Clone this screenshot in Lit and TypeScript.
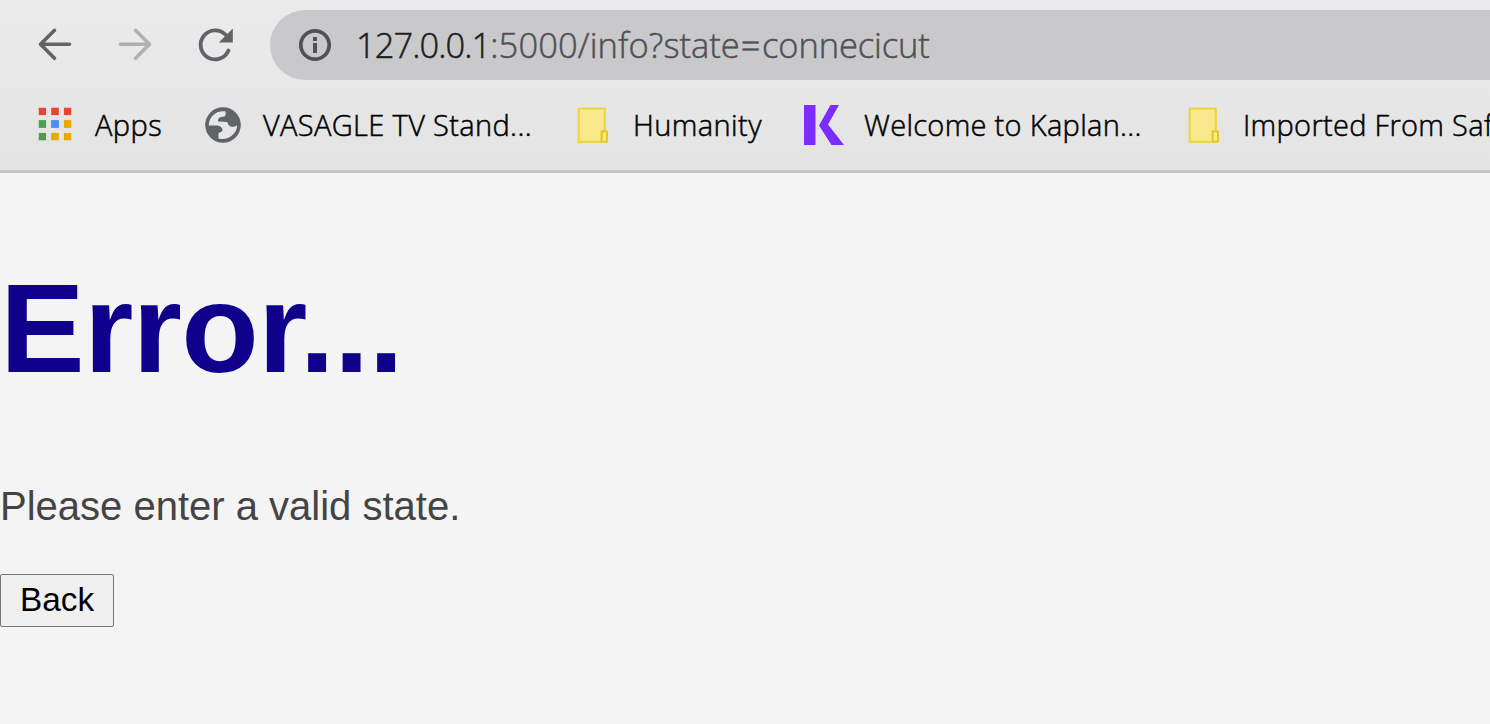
import { LitElement, html, css } from "lit";
import { customElement } from "lit/decorators.js";

const folder = html`<svg class="icon" width="34" height="40" viewBox="0 0 34 40">
  <path d="M2.5 3.5H29V26H31.5V36.5H2.5Z" fill="#fae88c" />
  <path d="M2.7 3.5H28.8V26.2H25.7V36.8H2.7Z" fill="none" stroke="#ead544" stroke-width="2.2" stroke-linejoin="round" />
  <path d="M26.3 26.5H31V36.8H25.7V27Z" fill="#fae88c" stroke="#e6c924" stroke-width="2" stroke-linejoin="round" />
</svg>`;

const appColors = ["#ea4335", "#ea4335", "#ea4335", "#4aa04f", "#4d8df6", "#eaa800", "#4aa04f", "#eaa800", "#eaa800"];

@customElement("app-root")
export class AppRoot extends LitElement {
  static styles = css`
    :host { display: block; height: 724px; overflow: hidden; background: #f4f4f4; font-family: "Liberation Sans", Arial, sans-serif; }
    .chrome { box-sizing: border-box; height: 173px; padding-top: 10px; background: linear-gradient(#ebebeb, #e3e3e3); border-bottom: 3px solid #c5c5c5; font-family: "Open Sans", "Noto Sans", sans-serif; font-weight: 300; -webkit-text-stroke-width: 0.5px; }
    .toolbar { display: flex; height: 70px; }
    .nav { width: 270px; flex: none; }
    .address { flex: 1; display: flex; align-items: center; background: #c9c9cb; border-radius: 35px 0 0 35px; padding-left: 28px; white-space: nowrap; }
    .info { flex: none; margin-right: 24px; }
    .url { font-size: 34.5px; line-height: 48px; color: #505154; }
    .host { color: #1c1d1f; letter-spacing: -0.95px; }
    .path { letter-spacing: 0.1px; }
    .key { letter-spacing: 0; }
    .equals { letter-spacing: 1.5px; margin-left: 1px; }
    .value { letter-spacing: -0.1px; }
    .bookmarks { display: flex; align-items: center; height: 90px; }
    .item { display: flex; align-items: center; flex: none; white-space: nowrap; color: #000; font-size: 29px; line-height: 40px; }
    .label { padding-bottom: 1px; }
    .icon { display: block; flex: none; }
    .apps { width: 190px; margin-left: 14px; }
    .apps .icon { margin: 0 23px 2px 24px; }
    .tv { width: 372px; }
    .tv .icon { margin-right: 21px; }
    .humanity { width: 228px; }
    .humanity .icon { margin-right: 23px; }
    .imported .icon { margin-right: 22px; }
    .kaplan { width: 383px; }
    .kaplan .icon { margin-right: 20px; }
    .apps .label { letter-spacing: 0.4px; }
    .tv .label { letter-spacing: 0.35px; }
    .humanity .label { letter-spacing: 0.4px; }
    .kaplan .label { letter-spacing: 0.3px; }
    .imported .label { letter-spacing: 0.3px; }
    h1 { margin: 0; padding-top: 84px; font-size: 127px; line-height: 143px; letter-spacing: -0.8px; color: #11008c; }
    p { margin: 0; padding-top: 83px; font-size: 40px; line-height: 46px; color: #444; }
    button { display: block; box-sizing: border-box; width: 114px; height: 53px; margin-top: 45px; padding: 0 0 2px; border: 1px solid #767676; border-radius: 2px; background: #efefef; color: #000; font: 33.33px "Liberation Sans", Arial, sans-serif; }
  `;

  render() {
    return html`
      <header class="chrome">
        <div class="toolbar">
          <svg class="nav" width="270" height="70" viewBox="0 10 270 70" fill="none" stroke-width="3.6" stroke-linecap="round" stroke-linejoin="round">
            <path d="M69.5 44.3H40.5M54.5 30.3L40.5 44.3L54.5 58.3" stroke="#606367" />
            <path d="M120.5 44.3H149.5M135.5 30.3L149.5 44.3L135.5 58.3" stroke="#b0b0b1" />
            <path d="M228.5 50.5A14.5 14.5 0 1 1 225.8 35" stroke="#606367" stroke-width="3.8" />
            <path d="M232.8 28.5V42.5H218.8Z" fill="#606367" />
          </svg>
          <div class="address">
            <svg class="info" width="34" height="34" viewBox="0 0 34 34">
              <circle cx="17" cy="17" r="14.2" fill="none" stroke="#505154" stroke-width="3.7" />
              <path d="M15 9h4v4h-4zM15 15h4v10h-4z" fill="#505154" />
            </svg>
            <div class="url"><span class="host">127.0.0.1</span><span class="path">:5000/info?</span><span class="key">state</span><span class="equals">=</span><span class="value">connecicut</span></div>
          </div>
        </div>
        <nav class="bookmarks">
          <div class="item apps">
            <svg class="icon" width="34" height="34" viewBox="0 0 34 34">
              ${appColors.map((c, i) => html`<svg x=${0.5 + (i % 3) * 12.6} y=${0.5 + Math.floor(i / 3) * 12.6} width="7.8" height="7.8"><rect width="7.8" height="7.8" fill=${c} /></svg>`)}
            </svg>
            <span class="label">Apps</span>
          </div>
          <div class="item tv">
            <svg class="icon" width="38" height="38" viewBox="0 0 38 38">
              <circle cx="19" cy="19" r="17.8" fill="#606367" />
              <path d="M21.5 5.3C12 4 5 10.5 4.7 19.5H13.5Q18 20 18.5 24Q18.3 26.3 14.5 26.7V32.6C23.5 35 33 28.5 33.2 19.3Q30 21.5 26.5 20.5Q24.2 19.8 23.5 16.5Q21.5 15.4 14 15.4Q13.6 12 16.5 11.2L21 10.3Q22.2 8 21.5 5.3Z" fill="#e6e6e6" />
            </svg>
            <span class="label">VASAGLE TV Stand...</span>
          </div>
          <div class="item humanity">${folder}<span class="label">Humanity</span></div>
          <div class="item kaplan">
            <svg class="icon" width="40" height="40" viewBox="0 0 40 40" fill="#7b2cff"><path d="M0 0H11.5V40H0ZM26.5 0H35L24 19.5L40 40H27.5L15 20.5Z" /></svg>
            <span class="label">Welcome to Kaplan...</span>
          </div>
          <div class="item imported">${folder}<span class="label">Imported From Saf</span></div>
        </nav>
      </header>
      <main>
        <h1>Error...</h1>
        <p>Please enter a valid state.</p>
        <button>Back</button>
      </main>
    `;
  }
}
